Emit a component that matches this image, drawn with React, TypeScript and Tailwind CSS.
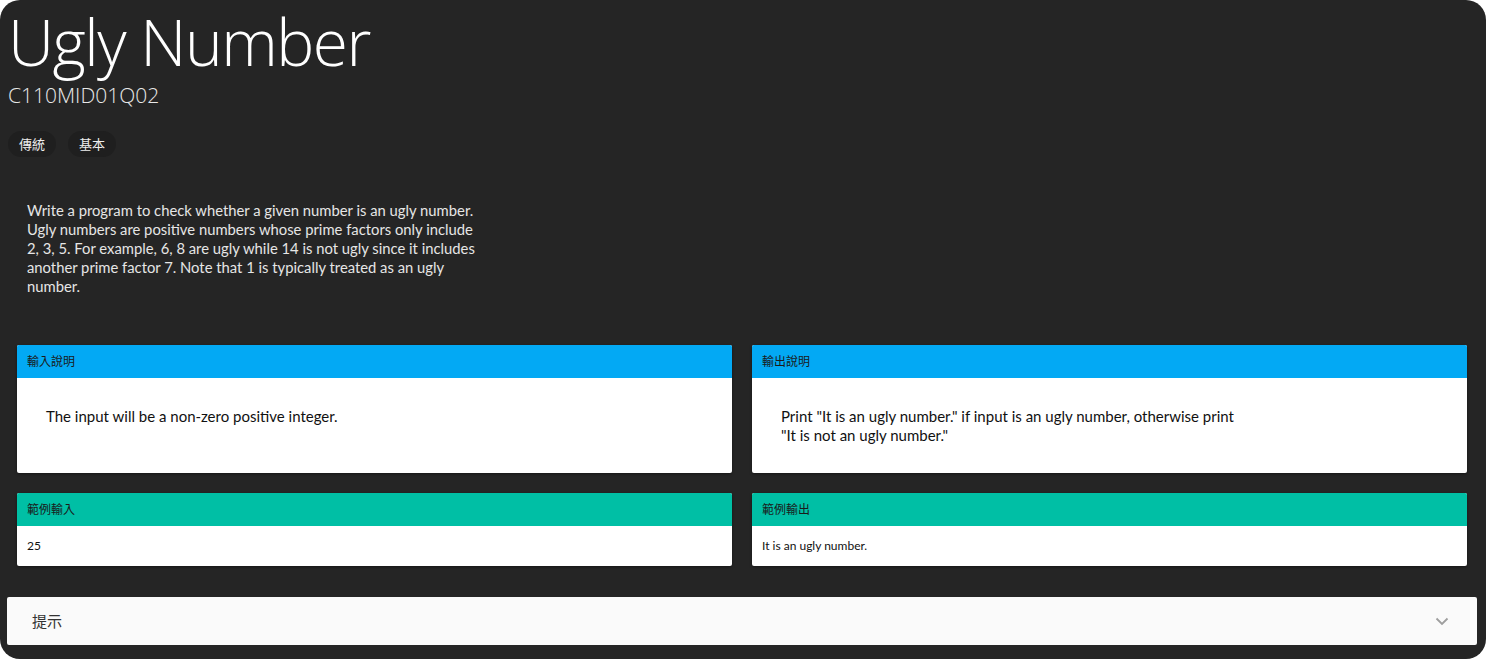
import React from "react";

const cjk = '"Noto Sans CJK TC", sans-serif';

function Card({ title, color, children, bodyClass }: { title: string; color: string; children: React.ReactNode; bodyClass: string }) {
  return (
    <div className="flex flex-col overflow-hidden rounded-[2px] bg-white shadow-[0_1px_3px_rgba(0,0,0,0.4)]">
      <div className={`h-[33px] flex items-center px-[10px] text-[12px] text-[#1a1a1a] ${color}`} style={{ fontFamily: '"Lato", "Noto Sans CJK TC", sans-serif' }}>
        {title}
      </div>
      <div className={bodyClass}>{children}</div>
    </div>
  );
}

export default function App() {
  return (
    <div className="w-[1486px] h-[659px] bg-white">
      <div className="h-full rounded-[20px] bg-[#252525] flex flex-col" style={{ fontFamily: '"Lato", "Noto Sans CJK TC", sans-serif' }}>
        <div className="pl-[8px] pt-[4px]">
          <h1 className="text-[64px] leading-[76px] text-white tracking-[-1.5px]" style={{ fontFamily: '"Open Sans", sans-serif', fontWeight: 300 }}>
            Ugly Number
          </h1>
          <div className="text-[21px] leading-[26px] text-[#e8e8e8] mt-[2px]" style={{ fontFamily: '"Open Sans", sans-serif', fontWeight: 300 }}>
            C110MID01Q02
          </div>
          <div className="flex gap-[12px] mt-[23px]">
            <span className="h-[26px] px-[11px] flex items-center rounded-full bg-[#1f1f1f] text-[13px] text-[#eeeeee]" style={{ fontFamily: cjk }}>傳統</span>
            <span className="h-[26px] px-[11px] flex items-center rounded-full bg-[#1f1f1f] text-[13px] text-[#eeeeee]" style={{ fontFamily: cjk }}>基本</span>
          </div>
        </div>
        <div className="ml-[27px] mt-[44px] w-[460px] text-[14.8px] leading-[19px] text-[#e6e6e6]">
          Write a program to check whether a given number is an ugly number. Ugly numbers are positive numbers whose prime factors only include 2, 3, 5. For example, 6, 8 are ugly while 14 is not ugly since it includes another prime factor 7. Note that 1 is typically treated as an ugly number.
        </div>
        <div className="grid grid-cols-2 gap-x-[20px] gap-y-[20px] pr-[19px] pl-[17px] mt-[49px]">
          <Card title="輸入說明" color="bg-[#03a9f4]" bodyClass="h-[95px] pl-[29px] pt-[29px] text-[15px] leading-[19px] text-[#111]">
            The input will be a non-zero positive integer.
          </Card>
          <Card title="輸出說明" color="bg-[#03a9f4]" bodyClass="h-[95px] pl-[29px] pt-[29px] text-[15px] leading-[19px] text-[#111]">
            Print "It is an ugly number." if input is an ugly number, otherwise print
            <br />
            "It is not an ugly number."
          </Card>
          <Card title="範例輸入" color="bg-[#00bfa5]" bodyClass="h-[40px] pl-[10px] flex items-center text-[12px] text-[#111]">
            25
          </Card>
          <Card title="範例輸出" color="bg-[#00bfa5]" bodyClass="h-[40px] pl-[10px] flex items-center text-[12px] text-[#111]">
            It is an ugly number.
          </Card>
        </div>
        <div className="ml-[7px] mr-[9px] mt-[31px] h-[48px] bg-[#fafafa] rounded-[2px] flex items-center justify-between pl-[25px] pr-[28px]">
          <span className="text-[15px] text-[#333]" style={{ fontFamily: cjk }}>提示</span>
          <svg width="14" height="9" viewBox="0 0 14 9" fill="none">
            <path d="M1.5 1.5 L7 7 L12.5 1.5" stroke="#9e9e9e" strokeWidth="1.8" />
          </svg>
        </div>
      </div>
    </div>
  );
}
